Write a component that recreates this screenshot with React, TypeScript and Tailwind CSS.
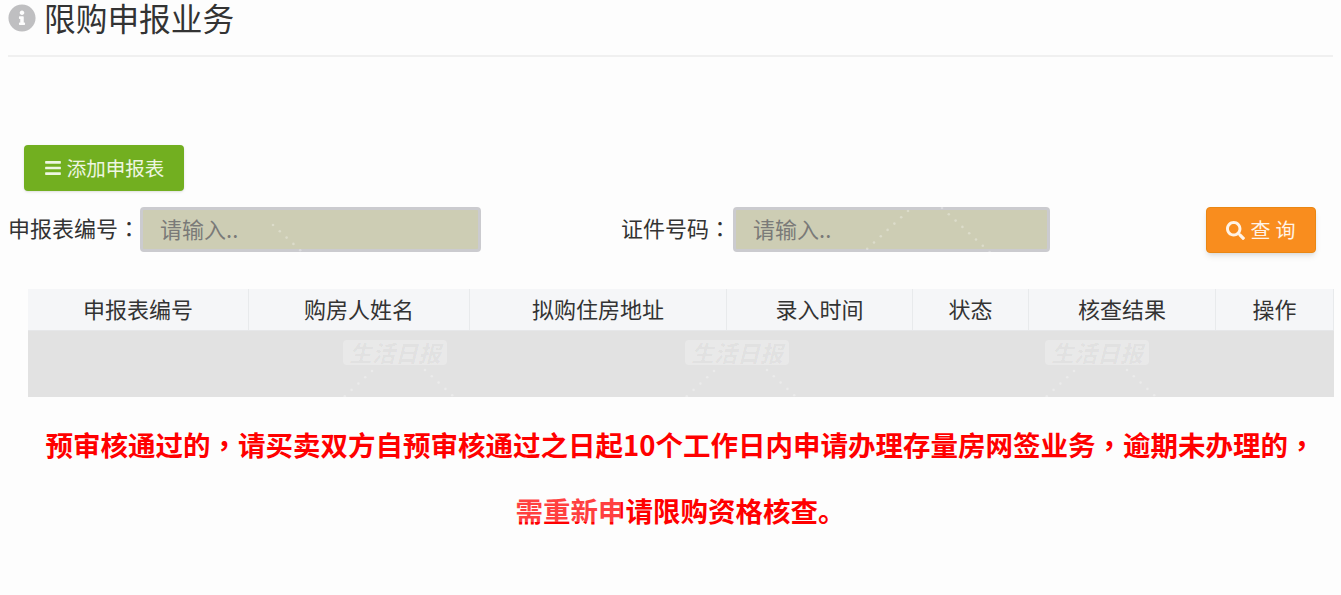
import { FaBars, FaInfoCircle, FaSearch } from "react-icons/fa";

const columns = [
  { label: "申报表编号", width: "w-[221px]" },
  { label: "购房人姓名", width: "w-[221px]" },
  { label: "拟购住房地址", width: "w-[257px]" },
  { label: "录入时间", width: "w-[186px]" },
  { label: "状态", width: "w-[116px]" },
  { label: "核查结果", width: "w-[187px]" },
  { label: "操作", width: "w-[118px]" },
];

const tableStamps = [
  "left-[343px] top-[340px]",
  "left-[685px] top-[340px]",
  "left-[1045px] top-[340px]",
];

const faintStamps = [
  "left-[358px] top-[26px]",
  "left-[698px] top-[26px]",
  "left-[1058px] top-[26px]",
  "left-[525px] top-[175px]",
  "left-[885px] top-[175px]",
  "left-[872px] top-[497px]",
];

// x, y of the first dot, step direction, dot count
const dotLines = [
  [372, 371, -1, 5],
  [425, 370, 1, 5],
  [714, 371, -1, 5],
  [767, 370, 1, 5],
  [1074, 371, -1, 5],
  [1127, 370, 1, 5],
  [908, 211, -1, 8],
  [942, 208, 1, 8],
  [273, 225, 1, 5],
];

function Stamp({ position, faint = false }: { position: string; faint?: boolean }) {
  return (
    <div
      className={`absolute ${position} flex h-[25px] w-[104px] items-center justify-center rounded-sm bg-white/25 text-[23px] leading-none font-black italic ${
        faint ? "text-black/[0.008]" : "text-black/[0.03]"
      }`}
    >
      生活日报
    </div>
  );
}

function CentredMark({ children }: { children: string }) {
  return <span className="font-['Noto_Sans_CJK_TC',sans-serif]">{children}</span>;
}

function Field({
  label,
  inputWidth,
  labelClass,
}: {
  label: string;
  inputWidth: string;
  labelClass?: string;
}) {
  return (
    <div className="flex items-center">
      <label className={`whitespace-nowrap pb-1 text-[22px] text-[#333] ${labelClass ?? ""}`}>
        {label}
        <CentredMark>：</CentredMark>
      </label>
      <input
        placeholder="请输入.."
        className={`${inputWidth} h-[45px] rounded border-[3px] border-[#cbcbcf] bg-[#cdcdb4] pr-[17px] pb-[3px] pl-[17px] text-[22px] placeholder:text-[#7a7a78] focus:outline-none`}
      />
    </div>
  );
}

export default function App() {
  return (
    <div className="relative h-[595px] overflow-hidden bg-[#fdfdfd] font-['Noto_Sans_CJK_SC','Liberation_Sans',sans-serif]">
      <div className="mx-2 flex h-[57px] items-start gap-2 border-b-2 border-[#f0f0f0] pt-1">
        <FaInfoCircle className="size-[28px] shrink-0 text-[#bfbfc1]" />
        <h1 className="-mt-[3px] text-[31.7px] leading-[32px] text-[#333]">限购申报业务</h1>
      </div>

      <div className="mt-[88px] ml-6">
        <button
          type="button"
          className="flex h-[46px] w-40 items-center justify-center gap-[5px] rounded bg-[#72af20] text-[19.5px] text-[#eef6e2] shadow-sm"
        >
          <FaBars className="size-[18px]" />
          添加申报表
        </button>
      </div>

      <div className="mt-4 flex items-start pl-2">
        <Field label="申报表编号" inputWidth="w-[341px]" />
        <div className="ml-[140px]">
          <Field label="证件号码" inputWidth="w-[317px]" labelClass="mr-[2px]" />
        </div>
        <button
          type="button"
          className="ml-[156px] flex h-[46px] w-[110px] items-center justify-center gap-[6px] rounded border border-[#ea8714] bg-[#f98d1e] pl-1 text-[20px] tracking-[5px] text-[#fff3e6] shadow-md"
        >
          <FaSearch className="size-[19px]" />
          查询
        </button>
      </div>

      <div className="mt-[36px] ml-7 w-[1306px]">
        <div className="flex h-[42px] border-b border-[#e6e7e9] bg-[#f5f6f8]">
          {columns.map((column) => (
            <div
              key={column.label}
              className={`${column.width} flex items-center justify-center border-r border-[#e8eaec] pb-[2px] text-[22px] text-[#333]`}
            >
              {column.label}
            </div>
          ))}
        </div>
        <div className="h-[66px] bg-[#e2e2e2]" />
      </div>

      <div className="mt-[14px] pl-5 text-center text-[27.5px] leading-[66px] font-bold text-[#ff0000]">
        <p>
          预审核通过的<CentredMark>，</CentredMark>请买卖双方自预审核通过之日起10个工作日内申请办理存量房网签业务
          <CentredMark>，</CentredMark>逾期未办理的<CentredMark>，</CentredMark>
        </p>
        <p>需重新申请限购资格核查。</p>
      </div>

      {tableStamps.map((position) => (
        <Stamp key={position} position={position} />
      ))}
      {faintStamps.map((position) => (
        <Stamp key={position} position={position} faint />
      ))}
      {/* the stamp over the second red line only washes the text out */}
      <div className="absolute top-[497px] left-[517px] h-[25px] w-[104px] rounded-sm bg-white/25" />

      <svg className="pointer-events-none absolute inset-0 size-full" viewBox="0 0 1341 595">
        {dotLines.flatMap(([x, y, dir, count]) =>
          Array.from({ length: count }, (_, i) => (
            <circle
              key={`${x}-${y}-${i}`}
              cx={x + dir * i * 6.8}
              cy={y + i * 6.3}
              r={1.3}
              fill="white"
              fillOpacity={0.3}
            />
          )),
        )}
      </svg>
    </div>
  );
}
